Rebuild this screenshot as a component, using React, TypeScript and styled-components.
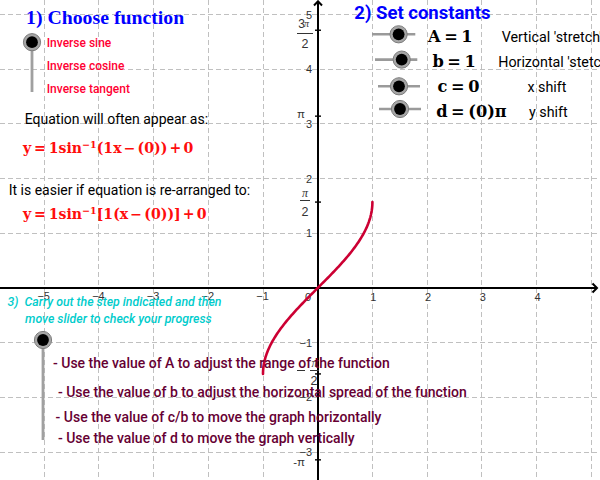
import React from "react";
import styled, { createGlobalStyle } from "styled-components";

const GlobalStyle = createGlobalStyle`
  html, body { margin: 0; padding: 0; background: #ffffff; }
  body { font-family: Roboto, "Noto Sans", sans-serif; }
  #root { width: 600px; height: 480px; }
`;

/* graph coordinate system */
const X0 = 317.7;
const Y0 = 288;
const U = 54.7;
const gx = (v: number) => X0 + v * U;
const gy = (v: number) => Y0 - v * U;
const crisp = (v: number) => Math.floor(v) + 0.5;

const Stage = styled.div`
  position: relative;
  width: 600px;
  height: 480px;
  overflow: hidden;
  background: #ffffff;
`;

const GraphCanvas = styled.svg`
  position: absolute;
  left: 0;
  top: 0;
  width: 600px;
  height: 480px;
  display: block;
`;

const Overlay = styled.div`
  position: absolute;
  inset: 0;
  display: grid;
  grid-template-columns: 345px 255px;
  grid-template-rows: 285px 195px;
`;

const LeftPanel = styled.section`
  display: flex;
  flex-direction: column;
  align-items: flex-start;
  padding-top: 7.4px;
`;

const RightPanel = styled.section`
  display: flex;
  flex-direction: column;
  align-items: flex-start;
  padding-top: 2.7px;
`;

const BottomPanel = styled.section`
  grid-column: 1 / -1;
  display: flex;
  flex-direction: column;
  align-items: flex-start;
  padding-top: 8.95px;
`;

const Heading = styled.h1<{ $x: number; $serif?: boolean }>`
  margin: 0 0 0 ${(p) => p.$x}px;
  font-family: ${(p) =>
    p.$serif ? '"Liberation Serif", serif' : 'Roboto, "Noto Sans", sans-serif'};
  font-weight: 700;
  font-size: ${(p) => (p.$serif ? 19.8 : 18.5)}px;
  line-height: 20px;
  color: #0000ff;
  white-space: nowrap;
`;

const Chooser = styled.div`
  display: flex;
  gap: 4.7px;
  margin: 4.7px 0 0 22px;
`;

const OptionList = styled.ul`
  list-style: none;
  margin: 0;
  padding: 0;
`;

const OptionItem = styled.li`
  font-family: Roboto, "Noto Sans", sans-serif;
  font-weight: 500;
  font-size: 12px;
  line-height: 23px;
  color: #ff0033;
  white-space: nowrap;
`;

const Note = styled.p<{ $x: number; $gap: number }>`
  margin: ${(p) => p.$gap}px 0 0 ${(p) => p.$x}px;
  font-family: Roboto, "Noto Sans", sans-serif;
  font-size: 14px;
  line-height: 16px;
  color: #000000;
  white-space: nowrap;
`;

const Equation = styled.div<{ $x: number; $gap: number }>`
  margin: ${(p) => p.$gap}px 0 0 ${(p) => p.$x}px;
  font-family: "DejaVu Serif", "Liberation Serif", serif;
  font-weight: 700;
  font-size: 14.1px;
  line-height: 20px;
  color: #ff0d0d;
  white-space: nowrap;
`;

const Op = styled.span<{ $space: number }>`
  margin: 0 ${(p) => p.$space}em;
`;

const Sup = styled.sup`
  font-size: 0.68em;
  line-height: 0;
  vertical-align: 0.55em;
`;

const ConstRow = styled.div<{ $label: number; $desc: number }>`
  display: grid;
  grid-template-columns: ${(p) => p.$label}px ${(p) => p.$desc - p.$label}px auto;
  align-items: baseline;
  height: 25px;
`;

const RowsBlock = styled.div`
  margin-top: 0.96px;
`;

const SliderCell = styled.div<{ $x: number }>`
  align-self: start;
  padding-left: ${(p) => p.$x}px;
  height: 25px;
`;

const ConstValue = styled.span`
  font-family: "DejaVu Serif", "Liberation Serif", serif;
  font-weight: 700;
  font-size: 16.2px;
  line-height: 25px;
  color: #000000;
  white-space: nowrap;
`;

const ConstDesc = styled.span`
  font-family: Roboto, "Noto Sans", sans-serif;
  font-size: 14.3px;
  line-height: 16px;
  color: #000000;
  white-space: nowrap;
`;

const StepLine = styled.p<{ $x: number }>`
  margin: 0 0 0 ${(p) => p.$x}px;
  font-family: Roboto, "Noto Sans", sans-serif;
  font-style: italic;
  font-weight: 500;
  font-size: 12.3px;
  line-height: 17.3px;
  color: #00cccc;
  white-space: nowrap;
`;

const Progress = styled.div`
  display: grid;
  grid-template-columns: 53px auto;
  margin-top: 1.45px;
`;

const ProgressTrack = styled.div`
  padding-left: 33px;
`;

const InstructionList = styled.ul`
  list-style: none;
  margin: 0;
  padding: 0;
`;

const Instruction = styled.li<{ $x: number; $gap: number }>`
  margin: ${(p) => p.$gap}px 0 0 ${(p) => p.$x}px;
  font-family: Roboto, "Noto Sans", sans-serif;
  font-weight: 500;
  font-size: 14px;
  line-height: 16px;
  color: #660033;
  white-space: nowrap;
`;

/* ---------- drawings ---------- */

const Knob: React.FC<{ cx: number; cy: number }> = ({ cx, cy }) => (
  <g>
    <circle cx={cx} cy={cy} r={8.6} fill="#a6a6a6" stroke="#7d7d7d" strokeWidth={1} />
    <circle cx={cx} cy={cy} r={5.9} fill="#000000" />
  </g>
);

const HSlider: React.FC<{ len: number; knob: number; y: number }> = ({ len, knob, y }) => (
  <svg width={len + 12} height={25} style={{ display: "block", overflow: "visible" }}>
    <line x1={0} y1={y} x2={len} y2={y} stroke="#9a9a9a" strokeWidth={2.6} />
    <Knob cx={knob} cy={y} />
  </svg>
);

const VSlider: React.FC<{ height: number; knobY: number; end: number }> = ({ height, knobY, end }) => (
  <svg width={20} height={height} style={{ display: "block", overflow: "visible" }}>
    <line x1={10} y1={knobY} x2={10} y2={end} stroke="#a0a0a0" strokeWidth={2.8} />
    <Knob cx={10} cy={knobY} />
  </svg>
);

const curvePath = (() => {
  const pts: string[] = [];
  const n = 120;
  for (let i = 0; i <= n; i++) {
    const t = -Math.PI / 2 + (Math.PI * i) / n;
    const x = Math.sin(t);
    pts.push(`${i === 0 ? "M" : "L"}${gx(x).toFixed(2)},${gy(t).toFixed(2)}`);
  }
  return pts.join(" ");
})();

const Graph: React.FC = () => {
  const vx = [-5, -4, -3, -2, -1, 1, 2, 3, 4, 5];
  const hy = [-3, -2, -1, 1, 2, 3, 4, 5];
  const axisFont = '"Liberation Sans", Arial, sans-serif';
  const piTicks = [1.5, 1, 0.5, -0.5, -1].map((k) => gy(k * Math.PI));
  return (
    <GraphCanvas viewBox="0 0 600 480">
      <g stroke="#c0c0c0" strokeWidth={1} strokeDasharray="5 3">
        {vx.map((k) => (
          <line key={`v${k}`} x1={crisp(gx(k))} y1={0} x2={crisp(gx(k))} y2={480} />
        ))}
        {hy.map((k) => (
          <line key={`h${k}`} x1={0} y1={crisp(gy(k))} x2={600} y2={crisp(gy(k))} />
        ))}
      </g>
      {/* axes */}
      <g stroke="#000" strokeWidth={2} fill="none">
        <line x1={318} y1={1} x2={318} y2={480} />
        <line x1={0} y1={288} x2={597} y2={288} />
        <polyline points="314,5.5 318,1.3 322,5.5" strokeLinejoin="miter" />
        <polyline points="592.5,283.5 597,288 592.5,292.5" strokeLinejoin="miter" />
      </g>
      <g stroke="#000" strokeWidth={1.4}>
        {piTicks.map((y, i) => (
          <line key={i} x1={315} y1={y} x2={321} y2={y} />
        ))}
      </g>
      {/* x labels */}
      <g fontFamily={axisFont} fontSize={11} fill="#333" textAnchor="middle">
        {[-5, -4, -3, -2, -1].map((k) => (
          <text key={k} x={gx(k) - 0.5} y={300}>{`\u2212${-k}`}</text>
        ))}
        {[1, 2, 3, 4].map((k) => (
          <text key={k} x={gx(k) + 1} y={301}>{k}</text>
        ))}
        <text x={308} y={300.5}>0</text>
      </g>
      {/* y labels */}
      <g fontFamily={axisFont} fontSize={11} fill="#333" textAnchor="end">
        {[5, 4, 3, 2, 1].map((k) => (
          <text key={k} x={312} y={gy(k) + 4}>{k}</text>
        ))}
        {[-1, -2, -3].map((k) => (
          <text key={k} x={312} y={gy(k) + 4}>{`\u2212${-k}`}</text>
        ))}
      </g>
      {/* pi labels */}
      <g fontFamily={axisFont} fill="#333">
        <text x={305} y={28} fontSize={12} textAnchor="end">3</text>
        <text x={304} y={26.5} fontSize={10} fontStyle="italic" fontFamily='"Liberation Serif", serif'>π</text>
        <line x1={297} y1={33.5} x2={313} y2={33.5} stroke="#333" strokeWidth={1} />
        <text x={305} y={48} fontSize={12.5} textAnchor="middle">2</text>

        <text x={305} y={117.5} fontSize={11.5} textAnchor="end">π</text>

        <text x={305} y={197} fontSize={12} fontStyle="italic" fontFamily='"Liberation Serif", serif' textAnchor="middle">π</text>
        <line x1={300} y1={200.5} x2={310} y2={200.5} stroke="#333" strokeWidth={1} />
        <text x={305} y={216} fontSize={12.5} textAnchor="middle">2</text>

        <line x1={297} y1={370.5} x2={305} y2={370.5} stroke="#333" strokeWidth={1} />
        <text x={314.5} y={367} fontSize={12} fontStyle="italic" fontFamily='"Liberation Serif", serif' textAnchor="middle">π</text>
        <line x1={310} y1={370.5} x2={319} y2={370.5} stroke="#333" strokeWidth={1} />
        <text x={314} y={385} fontSize={12.5} textAnchor="middle">2</text>

        <text x={305} y={466} fontSize={11.5} textAnchor="end">-π</text>
      </g>
      {/* arcsin curve */}
      <path d={curvePath} fill="none" stroke="#cc0033" strokeWidth={2.6} strokeLinecap="round" />
    </GraphCanvas>
  );
};

/* ---------- data ---------- */

const constants = [
  { slider: 26.7, len: 43.3, knob: 26.6, y: 10.3, label: 83, desc: 156.7, value: <>A<Op $space={0.22}>=</Op>1</>, text: "Vertical 'stretch'" },
  { slider: 30, len: 42.3, knob: 26.7, y: 10.6, label: 87.4, desc: 153.2, value: <>b<Op $space={0.22}>=</Op>1</>, text: "Horizontal 'stetch'" },
  { slider: 33, len: 42, knob: 21, y: 12.3, label: 92.6, desc: 182.4, value: <>c<Op $space={0.22}>=</Op>0</>, text: "x shift" },
  { slider: 34, len: 42, knob: 21, y: 10, label: 91.2, desc: 184, value: <>d<Op $space={0.22}>=</Op>(0)π</>, text: "y shift" },
];

const instructions = [
  { x: 0, gap: 25.5, text: "- Use the value of A to adjust the range of the function" },
  { x: 4.9, gap: 12.4, text: "- Use the value of b to adjust the horizontal spread of the function" },
  { x: 2.6, gap: 9, text: "- Use the value of c/b to move the graph horizontally" },
  { x: 4.9, gap: 5, text: "- Use the value of d to move the graph vertically" },
];

export default function App() {
  return (
    <>
      <GlobalStyle />
      <Stage>
        <Graph />
        <Overlay>
          <LeftPanel>
            <Heading $x={26} $serif>1) Choose function</Heading>
            <Chooser>
              <VSlider height={69} knobY={10.2} end={60} />
              <OptionList>
                <OptionItem>Inverse sine</OptionItem>
                <OptionItem>Inverse cosine</OptionItem>
                <OptionItem>Inverse tangent</OptionItem>
              </OptionList>
            </Chooser>
            <Note $x={24.7} $gap={10.1}>Equation will often appear as:</Note>
            <Equation $x={23} $gap={10.6}>
              y<Op $space={0.2}>=</Op>1sin<Sup>−1</Sup>(1x<Op $space={0.15}>−</Op>(0))<Op $space={0.15}>+</Op>0
            </Equation>
            <Note $x={8.7} $gap={24.4}>It is easier if equation is re-arranged to:</Note>
            <Equation $x={23} $gap={5.6}>
              y<Op $space={0.2}>=</Op>1sin<Sup>−1</Sup>[1(x<Op $space={0.15}>−</Op>(0))]<Op $space={0.15}>+</Op>0
            </Equation>
          </LeftPanel>
          <RightPanel>
            <Heading $x={9.3}>2) Set constants</Heading>
            <RowsBlock>
              {constants.map((c, i) => (
                <ConstRow key={i} $label={c.label} $desc={c.desc}>
                  <SliderCell $x={c.slider}>
                    <HSlider len={c.len} knob={c.knob} y={c.y} />
                  </SliderCell>
                  <ConstValue>{c.value}</ConstValue>
                  <ConstDesc>{c.text}</ConstDesc>
                </ConstRow>
              ))}
            </RowsBlock>
          </RightPanel>
          <BottomPanel>
            <StepLine $x={7.5}>3)&nbsp; Carry out the step indicated and then</StepLine>
            <StepLine $x={25}>move slider to check your progress</StepLine>
            <Progress>
              <ProgressTrack>
                <VSlider height={115} knobY={10} end={110} />
              </ProgressTrack>
              <InstructionList>
                {instructions.map((ins, i) => (
                  <Instruction key={i} $x={ins.x} $gap={ins.gap}>{ins.text}</Instruction>
                ))}
              </InstructionList>
            </Progress>
          </BottomPanel>
        </Overlay>
      </Stage>
    </>
  );
}
